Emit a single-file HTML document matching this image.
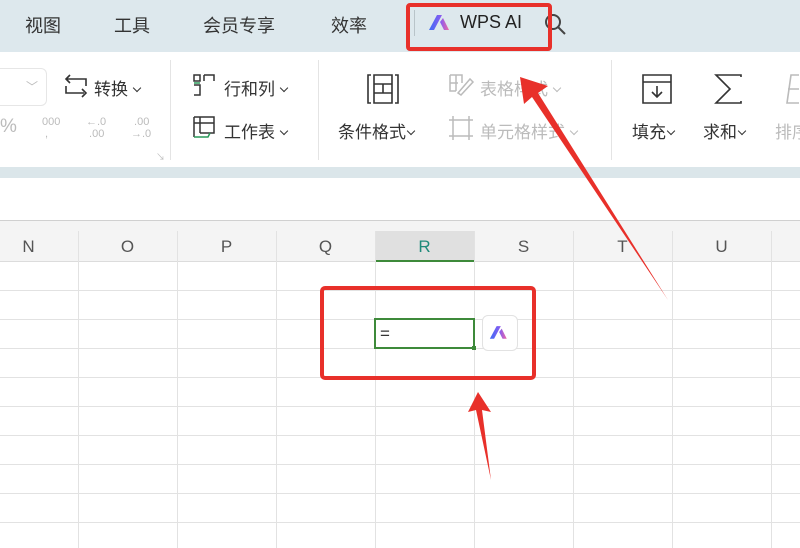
<!DOCTYPE html>
<html><head><meta charset="utf-8"><style>
*{margin:0;padding:0;box-sizing:border-box}
body{width:800px;height:548px;overflow:hidden;background:#fff;font-family:"Liberation Sans","Noto Sans CJK SC",sans-serif;position:relative;color:#333}
.a{position:absolute;white-space:nowrap}
.tab{font-size:18px;color:#333;top:12px}
.rb{font-size:17px;color:#333}
.gr{color:#bbb}
.c{display:inline-block;width:6px;height:6px;border-right:1.8px solid currentColor;border-bottom:1.8px solid currentColor;transform:rotate(45deg);margin:0 0 5px 6px;vertical-align:middle}
.c0{margin-left:2px}
.col{position:absolute;top:237px;font-size:17px;color:#555;width:99px;text-align:center}
</style></head><body>
<div class="a" style="left:0;top:0;width:800px;height:52px;background:#dde8ed"></div>
<div class="a tab" style="left:25px">视图</div>
<div class="a tab" style="left:114px">工具</div>
<div class="a tab" style="left:203px">会员专享</div>
<div class="a tab" style="left:331px">效率</div>
<div class="a" style="left:414px;top:10px;width:1px;height:26px;background:#b9c4c9"></div>
<svg class="a" style="left:428px;top:12px" width="26" height="20" viewBox="0 0 26 20"><defs><linearGradient id="g" x1="0" x2="1"><stop offset="0" stop-color="#3b6cf5"/><stop offset="0.6" stop-color="#8a5cf0"/><stop offset="1" stop-color="#f06aa0"/></linearGradient></defs><path d="M1 18 L9 3 L14 3 L6 18Z M12 10 L15 6 L21 18 L16 18Z" fill="url(#g)"/></svg>
<div class="a" style="left:460px;top:12px;font-size:18px;color:#222">WPS AI</div>
<svg class="a" style="left:543px;top:12px" width="26" height="26"><circle cx="10" cy="10" r="7" fill="none" stroke="#444" stroke-width="2"/><path d="M15 15 L22 22" stroke="#444" stroke-width="2"/></svg>
<div class="a" style="left:406px;top:3px;width:146px;height:48px;border:4px solid #e8302a;border-radius:4px"></div>

<div class="a" style="left:0;top:52px;width:800px;height:116px;background:#fff"></div>
<div class="a" style="left:0;top:68px;width:47px;height:38px;border:1px solid #e6e6e6;border-left:none;border-radius:0 6px 6px 0"></div>
<div class="a gr" style="left:26px;top:78px;font-size:12px">﹀</div>
<svg class="a" style="left:62px;top:74px" width="28" height="24"><path d="M4 5 H24 V12 M22 19 H4 V12 M8 1 L4 5 L8 9 M20 15 L24 19 L20 23" fill="none" stroke="#333" stroke-width="1.6"/></svg>
<div class="a rb" style="left:94px;top:75px">转换<span class="c"></span></div>
<div class="a gr" style="left:0;top:116px;font-size:19px">%</div>
<div class="a gr" style="left:42px;top:116px;font-size:11px;line-height:12px">000<br>&nbsp;,</div>
<div class="a gr" style="left:86px;top:116px;font-size:11px;line-height:12px">←.0<br>&nbsp;.00</div>
<div class="a gr" style="left:131px;top:116px;font-size:11px;line-height:12px">&nbsp;.00<br>→.0</div>
<div class="a gr" style="left:156px;top:150px;font-size:9px">↘</div>
<div class="a" style="left:170px;top:60px;width:1px;height:100px;background:#e4e4e4"></div>
<svg class="a" style="left:192px;top:73px" width="26" height="24"><path d="M2 2 H8 V8 H2Z M2 12 H8 V22 H2 M12 2 H22 V8 M12 2 V8" fill="none" stroke="#333" stroke-width="1.5"/><path d="M2 10 H8" stroke="#2a9a5a" stroke-width="1.5"/></svg>
<div class="a rb" style="left:224px;top:75px">行和列<span class="c"></span></div>
<svg class="a" style="left:192px;top:115px" width="26" height="26"><path d="M2 2 H22 V18 H8 M2 2 V22 M2 8 H22 M8 2 V18" fill="none" stroke="#333" stroke-width="1.5"/><path d="M2 22 H16 L18 18" fill="none" stroke="#2a9a5a" stroke-width="1.5"/></svg>
<div class="a rb" style="left:224px;top:118px">工作表<span class="c"></span></div>
<div class="a" style="left:318px;top:60px;width:1px;height:100px;background:#e4e4e4"></div>
<svg class="a" style="left:366px;top:72px" width="34" height="34"><path d="M5 3 H2 V31 H5 M29 3 H32 V31 H29 M8 3 H26 V31 H8Z M8 12 H26 M8 21 H26 M17 12 V21" fill="none" stroke="#333" stroke-width="1.6"/></svg>
<div class="a rb" style="left:338px;top:118px">条件格式<span class="c c0"></span></div>
<svg class="a" style="left:448px;top:73px" width="28" height="24"><path d="M2 2 H14 V10 M2 2 V18 H8 M2 10 H10 M8 2 V18 M10 20 L22 6 L25 9 L13 22Z" fill="none" stroke="#bbb" stroke-width="1.5"/></svg>
<div class="a rb gr" style="left:480px;top:75px">表格样式<span class="c"></span></div>
<svg class="a" style="left:448px;top:115px" width="26" height="26"><path d="M5 1 V25 M21 1 V25 M1 5 H25 M1 21 H25" fill="none" stroke="#bbb" stroke-width="1.5"/></svg>
<div class="a rb gr" style="left:480px;top:118px">单元格样式<span class="c"></span></div>
<div class="a" style="left:611px;top:60px;width:1px;height:100px;background:#e4e4e4"></div>
<svg class="a" style="left:640px;top:72px" width="34" height="34"><path d="M3 3 H31 V31 H3Z M3 10 H31 M17 14 V25 M12 20 L17 25 L22 20" fill="none" stroke="#333" stroke-width="1.6"/></svg>
<div class="a rb" style="left:632px;top:118px">填充<span class="c c0"></span></div>
<svg class="a" style="left:713px;top:72px" width="32" height="34"><path d="M28 5 V3 H3 L17 17 L3 31 H28 V29" fill="none" stroke="#333" stroke-width="1.6"/></svg>
<div class="a rb" style="left:703px;top:118px">求和<span class="c c0"></span></div>
<svg class="a" style="left:785px;top:72px" width="15" height="34"><path d="M14 3 H6 L2 31 H14 M3 17 H14" fill="none" stroke="#bbb" stroke-width="1.6"/></svg>
<div class="a rb gr" style="left:775px;top:118px">排序</div>

<div class="a" style="left:0;top:167px;width:800px;height:11px;background:#dbe6ea"></div>
<div class="a" style="left:0;top:220px;width:800px;height:1px;background:#d0d0d0"></div>
<div class="a" style="left:0;top:221px;width:800px;height:41px;background:#f4f4f4;border-bottom:1px solid #dcdcdc"></div>
<div class="a" style="left:375px;top:231px;width:99px;height:31px;background:#e0e0e0;border-bottom:2px solid #3e8a3a"></div>
<div class="col" style="left:-21px">N</div>
<div class="col" style="left:78px">O</div>
<div class="col" style="left:177px">P</div>
<div class="col" style="left:276px">Q</div>
<div class="col" style="left:375px;color:#1f8a7a">R</div>
<div class="col" style="left:474px">S</div>
<div class="col" style="left:573px">T</div>
<div class="col" style="left:672px">U</div>
<svg class="a" style="left:0;top:231px" width="800" height="317">
<g stroke="#e2e2e2" stroke-width="1">
<path d="M78.5 0 V317 M177.5 0 V317 M276.5 0 V317 M375.5 0 V317 M474.5 0 V317 M573.5 0 V317 M672.5 0 V317 M771.5 0 V317"/>
<path d="M0 59.5 H800 M0 88.5 H800 M0 117.5 H800 M0 146.5 H800 M0 175.5 H800 M0 204.5 H800 M0 233.5 H800 M0 262.5 H800 M0 291.5 H800"/>
</g></svg>
<div class="a" style="left:374px;top:318px;width:101px;height:31px;border:2px solid #3e8a3a"></div>
<div class="a" style="left:472px;top:346px;width:4px;height:4px;background:#3e8a3a"></div>
<div class="a" style="left:380px;top:324px;font-size:17px;color:#333">=</div>
<div class="a" style="left:482px;top:315px;width:36px;height:36px;border:1px solid #e2e2e2;border-radius:6px;background:#fff"></div>
<svg class="a" style="left:489px;top:323px" width="22" height="18" viewBox="0 0 26 20"><path d="M1 18 L9 3 L14 3 L6 18Z M12 10 L15 6 L21 18 L16 18Z" fill="url(#g)"/></svg>
<div class="a" style="left:320px;top:286px;width:216px;height:94px;border:4px solid #e8302a;border-radius:5px"></div>
<svg class="a" style="left:0;top:0" width="800" height="548">
<polygon points="520,77 548,86 538,93 668,300 532,97 524,104" fill="#e8302a"/>
<polygon points="478,392 468,412 476,410 491,480 482,410 491,412" fill="#e8302a"/>
</svg>
</body></html>
